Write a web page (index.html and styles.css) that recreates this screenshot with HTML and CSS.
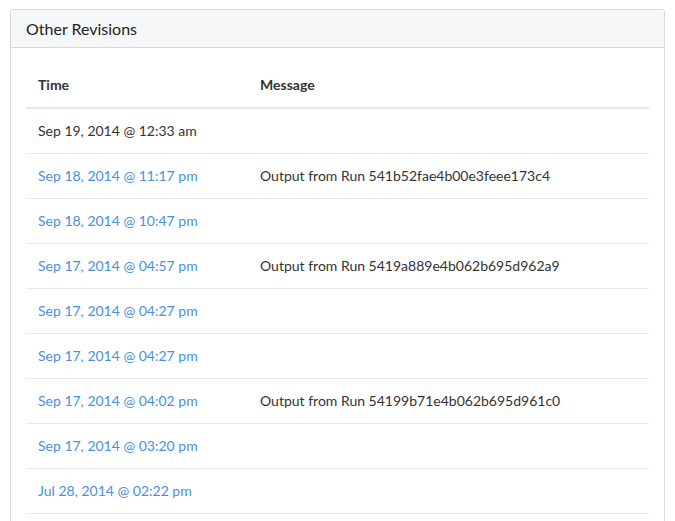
FILE: index.html
```html
<!DOCTYPE html>
<html>
<head>
<meta charset="utf-8">
<link rel="stylesheet" href="styles.css">
</head>
<body>
<div class="panel">
  <div class="panel-heading">Other Revisions</div>
  <div class="panel-body">
    <table class="revisions">
      <thead>
        <tr><th class="col-time">Time</th><th>Message</th></tr>
      </thead>
      <tbody>
        <tr><td class="current">Sep 19, 2014 @ 12:33 am</td><td></td></tr>
        <tr><td><a href="#">Sep 18, 2014 @ 11:17 pm</a></td><td>Output from Run 541b52fae4b00e3feee173c4</td></tr>
        <tr><td><a href="#">Sep 18, 2014 @ 10:47 pm</a></td><td></td></tr>
        <tr><td><a href="#">Sep 17, 2014 @ 04:57 pm</a></td><td>Output from Run 5419a889e4b062b695d962a9</td></tr>
        <tr><td><a href="#">Sep 17, 2014 @ 04:27 pm</a></td><td></td></tr>
        <tr><td><a href="#">Sep 17, 2014 @ 04:27 pm</a></td><td></td></tr>
        <tr><td><a href="#">Sep 17, 2014 @ 04:02 pm</a></td><td>Output from Run 54199b71e4b062b695d961c0</td></tr>
        <tr><td><a href="#">Sep 17, 2014 @ 03:20 pm</a></td><td></td></tr>
        <tr><td><a href="#">Jul 28, 2014 @ 02:22 pm</a></td><td></td></tr>
      </tbody>
    </table>
  </div>
</div>
</body>
</html>
```
FILE: styles.css
```css
html, body {
  margin: 0;
  padding: 0;
  background: #ffffff;
}
body {
  font-family: Lato, "Open Sans", "Liberation Sans", sans-serif;
  font-size: 14px;
  color: #333333;
}
.panel {
  margin: 9px 10px 0 10px;
  border: 1px solid #d6d9dd;
  border-radius: 3px;
  background: #ffffff;
}
.panel-heading {
  background: #f6f7f9;
  border-bottom: 1px solid #d6d9dd;
  border-radius: 3px 3px 0 0;
  padding: 0 15px;
  height: 37px;
  line-height: 38px;
  font-size: 16px;
  color: #222222;
}
.panel-body {
  padding: 15px;
}
.revisions {
  width: 100%;
  border-collapse: collapse;
}
.revisions th,
.revisions td {
  text-align: left;
  padding: 12px;
  line-height: 20px;
  vertical-align: top;
}
.revisions th {
  font-weight: 700;
  color: #333333;
  border-bottom: 2px solid #e6e9ee;
}
.revisions td {
  border-bottom: 1px solid #e6e9ee;
  color: #333333;
}
.col-time {
  width: 198px;
}
.revisions a {
  color: #4a8fdf;
  text-decoration: none;
}
```
